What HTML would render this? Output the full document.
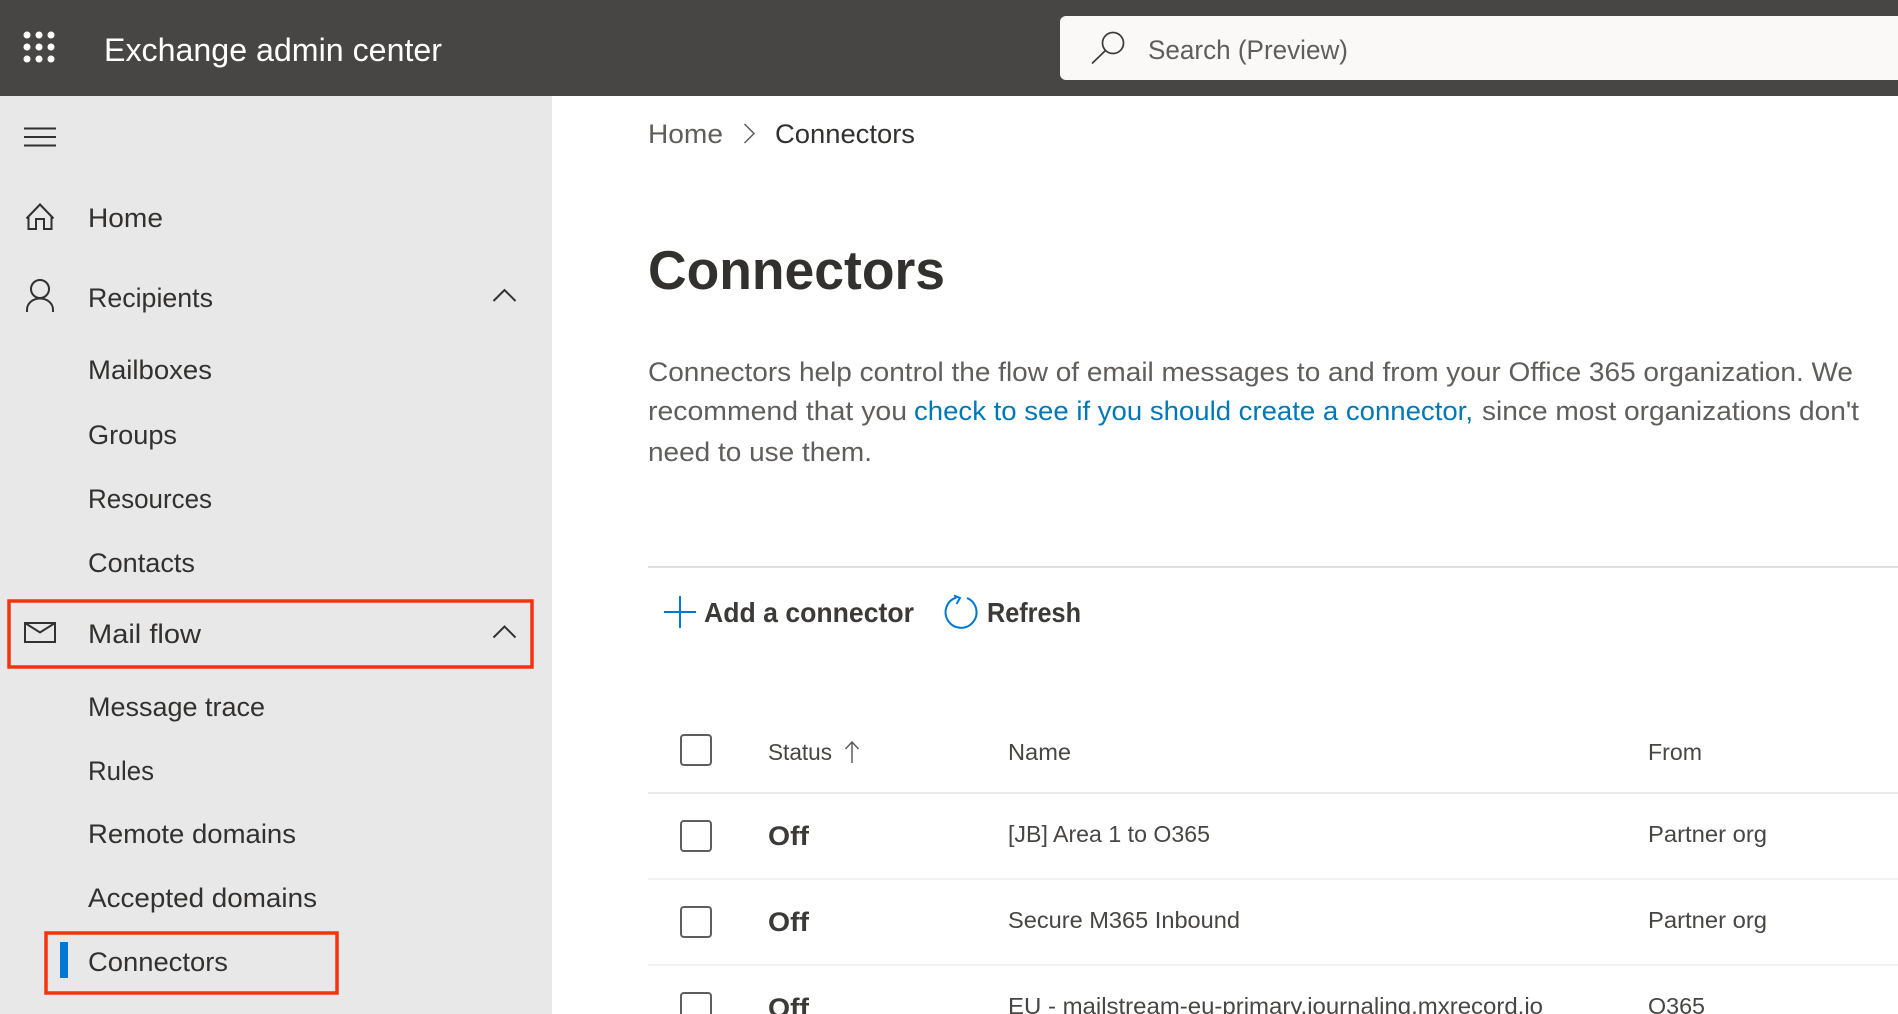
<!DOCTYPE html>
<html lang="en">
<head>
<meta charset="utf-8">
<title>Exchange admin center</title>
<style>
html,body{margin:0;padding:0;width:1898px;height:1014px;overflow:hidden;background:#fff}
svg{display:block}
text{font-family:"Liberation Sans",sans-serif;white-space:pre}
.nav{font-size:27px;fill:#323130}
.p{font-size:27px;fill:#605e5c}
.cell{font-size:23.5px;fill:#484644}
.off{font-size:27px;font-weight:bold;fill:#3b3a39}
.cmd{font-size:28px;font-weight:bold;fill:#3b3a39}
</style>
</head>
<body>
<svg width="1898" height="1014" viewBox="0 0 1898 1014" xmlns="http://www.w3.org/2000/svg">
<rect x="0" y="0" width="1898" height="1014" fill="#fff"/>
<rect x="0" y="96" width="552" height="918" fill="#e8e8e8"/>
<rect x="0" y="0" width="1898" height="96" fill="#484644"/>

<g fill="#fff">
<circle cx="27" cy="35" r="3.500"/><circle cx="39" cy="35" r="3.500"/><circle cx="51" cy="35" r="3.500"/>
<circle cx="27" cy="47" r="3.500"/><circle cx="39" cy="47" r="3.500"/><circle cx="51" cy="47" r="3.500"/>
<circle cx="27" cy="59" r="3.500"/><circle cx="39" cy="59" r="3.500"/><circle cx="51" cy="59" r="3.500"/>
</g>
<text x="104" y="61" font-size="32" fill="#fff" textLength="338" lengthAdjust="spacingAndGlyphs">Exchange admin center</text>

<path d="M1066 16H1898V80H1066a6 6 0 0 1-6-6V22a6 6 0 0 1 6-6z" fill="#faf9f8"/>
<g fill="none" stroke="#3b3a39" stroke-width="1.700">
<circle cx="1113" cy="43" r="10.500"/>
<path d="M1105.500 50.500 1092.500 63" stroke-linecap="round"/>
</g>
<text x="1148" y="59" font-size="26.500" fill="#605e5c" textLength="200" lengthAdjust="spacingAndGlyphs">Search (Preview)</text>

<g stroke="#323130" stroke-width="2" fill="none">
<path d="M24 128.500H56M24 137H56M24 145.500H56"/>
<path d="M26.500 218.500 40 204.500 53.500 218.500M28.500 216V229H36V219H44V229H51.500V216"/>
<circle cx="40" cy="289" r="9"/>
<path d="M27 312V310C27 303 33 298.500 40 298.500S53 303 53 310V312"/>
<path d="M493.500 301 504.500 290 515.500 301"/>
<rect x="25" y="623" width="30" height="19"/>
<path d="M25 623 40 632.500 55 623"/>
<path d="M493.500 637.500 504.500 626.500 515.500 637.500"/>
</g>

<g class="nav">
<text class="nav" x="88" y="227" textLength="75" lengthAdjust="spacingAndGlyphs">Home</text>
<text class="nav" x="88" y="307" textLength="125" lengthAdjust="spacingAndGlyphs">Recipients</text>
<text class="nav" x="88" y="379" textLength="124" lengthAdjust="spacingAndGlyphs">Mailboxes</text>
<text class="nav" x="88" y="444" textLength="89" lengthAdjust="spacingAndGlyphs">Groups</text>
<text class="nav" x="88" y="508" textLength="124" lengthAdjust="spacingAndGlyphs">Resources</text>
<text class="nav" x="88" y="572" textLength="107" lengthAdjust="spacingAndGlyphs">Contacts</text>
<text class="nav" x="88" y="643" textLength="113" lengthAdjust="spacingAndGlyphs">Mail flow</text>
<text class="nav" x="88" y="716" textLength="177" lengthAdjust="spacingAndGlyphs">Message trace</text>
<text class="nav" x="88" y="780" textLength="66" lengthAdjust="spacingAndGlyphs">Rules</text>
<text class="nav" x="88" y="843" textLength="208" lengthAdjust="spacingAndGlyphs">Remote domains</text>
<text class="nav" x="88" y="907" textLength="229" lengthAdjust="spacingAndGlyphs">Accepted domains</text>
<text class="nav" x="88" y="971" textLength="140" lengthAdjust="spacingAndGlyphs">Connectors</text>
</g>

<rect x="60" y="942" width="8" height="36" fill="#0078d4"/>
<rect x="9" y="601" width="523" height="66" fill="none" stroke="#f5330f" stroke-width="3.500"/>
<rect x="46" y="933" width="291" height="60" fill="none" stroke="#f5330f" stroke-width="3.500"/>

<text x="648" y="143" font-size="27" fill="#605e5c" textLength="75" lengthAdjust="spacingAndGlyphs">Home</text>
<path d="M744.500 124 754 133.500 744.500 143" fill="none" stroke="#605e5c" stroke-width="1.500"/>
<text x="775" y="143" font-size="27" fill="#323130" textLength="140" lengthAdjust="spacingAndGlyphs">Connectors</text>

<text x="648" y="289" font-size="55" font-weight="bold" fill="#323130" textLength="297" lengthAdjust="spacingAndGlyphs">Connectors</text>

<text class="p" x="648" y="381" textLength="1205" lengthAdjust="spacingAndGlyphs">Connectors help control the flow of email messages to and from your Office 365 organization. We</text>
<text class="p" x="648" y="420" textLength="259" lengthAdjust="spacingAndGlyphs">recommend that you</text>
<text x="914" y="420" font-size="27" fill="#0078b8" textLength="559" lengthAdjust="spacingAndGlyphs">check to see if you should create a connector,</text>
<text class="p" x="1482" y="420" textLength="377" lengthAdjust="spacingAndGlyphs">since most organizations don't</text>
<text class="p" x="648" y="461" textLength="224" lengthAdjust="spacingAndGlyphs">need to use them.</text>

<rect x="648" y="566" width="1250" height="2" fill="#e1dfdd"/>

<path d="M664 612H696M680 596V628" fill="none" stroke="#0078d4" stroke-width="2"/>
<text class="cmd" x="704" y="622" textLength="210" lengthAdjust="spacingAndGlyphs">Add a connector</text>
<path d="M967 598A15.500 15.500 0 1 1 956.500 597.500" fill="none" stroke="#0078d4" stroke-width="2"/>
<path d="M954 595.500 960 598 956.500 604" fill="none" stroke="#0078d4" stroke-width="2"/>
<text class="cmd" x="987" y="622" textLength="94" lengthAdjust="spacingAndGlyphs">Refresh</text>

<g fill="none" stroke="#605e5c" stroke-width="2">
<rect x="681" y="735" width="30" height="30" rx="3"/>
<rect x="681" y="821" width="30" height="30" rx="3"/>
<rect x="681" y="907" width="30" height="30" rx="3"/>
<rect x="681" y="993" width="30" height="30" rx="3"/>
<path d="M852 763V742M845.500 749 852 742 858.500 749" stroke-width="1.500"/>
</g>

<text class="cell" x="768" y="760" textLength="64" lengthAdjust="spacingAndGlyphs">Status</text>
<text class="cell" x="1008" y="760" textLength="63" lengthAdjust="spacingAndGlyphs">Name</text>
<text class="cell" x="1648" y="760" textLength="54" lengthAdjust="spacingAndGlyphs">From</text>
<rect x="648" y="792" width="1250" height="2" fill="#edebe9"/>

<text class="off" x="768" y="845" textLength="41" lengthAdjust="spacingAndGlyphs">Off</text>
<text class="cell" x="1008" y="842" textLength="202" lengthAdjust="spacingAndGlyphs">[JB] Area 1 to O365</text>
<text class="cell" x="1648" y="842" textLength="119" lengthAdjust="spacingAndGlyphs">Partner org</text>
<rect x="648" y="878" width="1250" height="2" fill="#f3f2f1"/>

<text class="off" x="768" y="931" textLength="41" lengthAdjust="spacingAndGlyphs">Off</text>
<text class="cell" x="1008" y="928" textLength="232" lengthAdjust="spacingAndGlyphs">Secure M365 Inbound</text>
<text class="cell" x="1648" y="928" textLength="119" lengthAdjust="spacingAndGlyphs">Partner org</text>
<rect x="648" y="964" width="1250" height="2" fill="#f3f2f1"/>

<text class="off" x="768" y="1017" textLength="41" lengthAdjust="spacingAndGlyphs">Off</text>
<text class="cell" x="1008" y="1014" textLength="535" lengthAdjust="spacingAndGlyphs">EU - mailstream-eu-primary.journaling.mxrecord.io</text>
<text class="cell" x="1648" y="1014" textLength="57" lengthAdjust="spacingAndGlyphs">O365</text>
</svg>
</body>
</html>
